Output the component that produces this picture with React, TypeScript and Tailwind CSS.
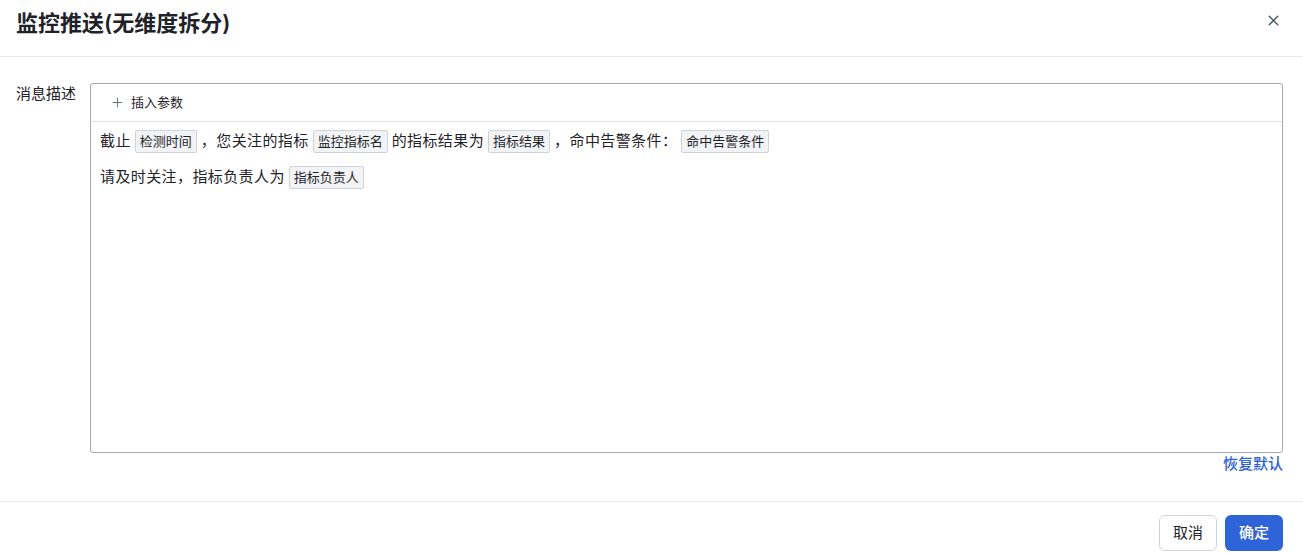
import { X, Plus } from 'lucide-react'

const font = 'font-["Inter","Noto_Sans_CJK_SC",sans-serif]'

function Tag({ children }: { children: string }) {
  return (
    <span className="mx-1 inline-flex h-[23px] items-center rounded-[2px] border border-[#cfd3d9] bg-[#f2f3f5] px-[4px] text-[13px] leading-none tracking-normal text-[#1f2329]">
      {children}
    </span>
  )
}

export default function App() {
  return (
    <div className={`${font} flex h-[554px] w-[1303px] flex-col bg-white text-[#1f2329]`}>
      <header className="flex h-[57px] shrink-0 items-start justify-between border-b border-[#e9eaec] pl-4 pr-[21px] pt-[8px]">
        <h1 className="text-[22px] font-semibold leading-[30px] text-[#1f2329]">监控推送(无维度拆分)</h1>
        <button className="mt-[4px] text-[#4e5969]">
          <X size={17} strokeWidth={2} />
        </button>
      </header>

      <main className="flex flex-1 gap-[14px] pl-4 pr-5 pt-[26px]">
        <label className="pt-[1px] text-[15px] leading-[20px] text-[#1f2329]">消息描述</label>
        <div className="flex flex-1 flex-col">
          <div className="flex h-[370px] flex-col rounded-[3px] border border-[#a4abb6]">
            <div className="flex h-[38px] items-center gap-[6px] border-b border-[#dcdfe4] pl-[19px] text-[13px]">
              <Plus size={15} strokeWidth={1.3} className="text-[#4e5969]" />
              <span>插入参数</span>
            </div>
            <div className="px-[9px] pt-[7px] text-[15px] leading-[24px] tracking-[0.4px]">
              <p className="flex items-center">
                截止<Tag>检测时间</Tag>，您关注的指标<Tag>监控指标名</Tag>的指标结果为<Tag>指标结果</Tag>，命中告警条件：<Tag>命中告警条件</Tag>
              </p>
              <p className="mt-[12px] flex items-center">
                请及时关注，指标负责人为<Tag>指标负责人</Tag>
              </p>
            </div>
          </div>
          <div className="flex justify-end pt-[1px]">
            <button className="text-[15px] font-medium leading-[20px] text-[#2d5fd6]">恢复默认</button>
          </div>
        </div>
      </main>

      <footer className="flex h-[53px] shrink-0 items-start justify-end gap-2 border-t border-[#e9eaec] px-5 pt-[13px]">
        <button className="h-[36px] w-[58px] rounded-[6px] border border-[#d0d3d6] bg-white text-[15px] text-[#1f2329]">取消</button>
        <button className="h-[36px] w-[58px] rounded-[6px] bg-[#2f63d8] text-[15px] font-medium text-white">确定</button>
      </footer>
    </div>
  )
}
